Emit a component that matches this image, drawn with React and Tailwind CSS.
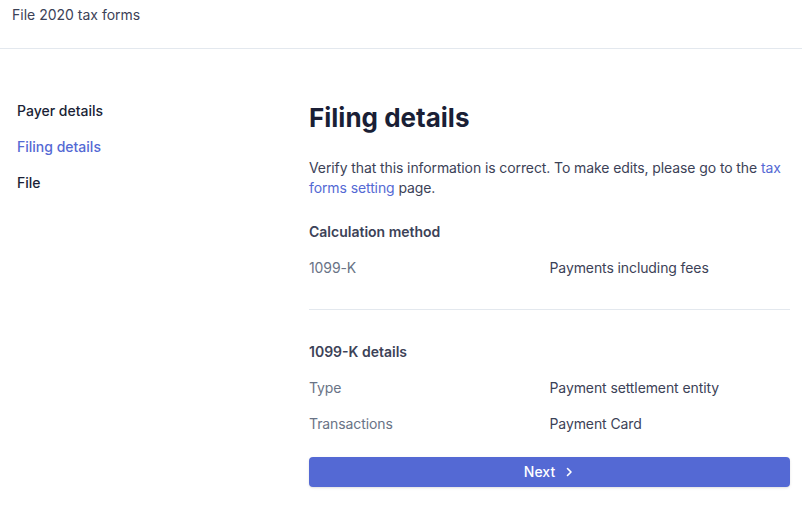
export default function App() {
  const Row = ({ l, v }) => (
    <div className="grid grid-cols-2 h-9 items-center text-sm tracking-[-0.1px]">
      <span className="text-[#697386]">{l}</span>
      <span className="text-[#3c4257]">{v}</span>
    </div>
  );
  return (
    <div className="w-[802px] h-[505px] bg-white" style={{ fontFamily: "Inter, sans-serif" }}>
      <div className="h-[49px] border-b border-[#e3e8ee] px-3 pt-[5px] text-sm text-[#3c4257]">File 2020 tax forms</div>
      <div className="flex pt-[44px]">
        <div className="w-[309px] pl-[17px] flex flex-col text-sm font-medium">
          <div className="h-9 flex items-center text-[#1a1f36]">Payer details</div>
          <div className="h-9 flex items-center text-[#5469d4]">Filing details</div>
          <div className="h-9 flex items-center text-[#1a1f36]">File</div>
        </div>
        <div className="w-[481px]">
          <h1 className="text-[26px] font-bold text-[#1a1f36] leading-8 pt-[9px]">Filing details</h1>
          <p className="mt-[24px] text-sm leading-5 text-[#3c4257] tracking-[-0.1px]">
            Verify that this information is correct. To make edits, please go to the <span className="text-[#5469d4]">tax forms setting</span> page.
          </p>
          <div className="mt-[24px] text-sm font-semibold text-[#3c4257] h-5 flex items-center">Calculation method</div>
          <div className="mt-[8px]"><Row l="1099-K" v="Payments including fees" /></div>
          <div className="border-t border-[#e3e8ee] mt-[23px]" />
          <div className="mt-[32px] text-sm font-semibold text-[#3c4257] h-5 flex items-center">1099-K details</div>
          <div className="mt-[8px]">
            <Row l="Type" v="Payment settlement entity" />
            <Row l="Transactions" v="Payment Card" />
          </div>
          <button className="mt-[15px] w-full h-[30px] rounded bg-[#5469d4] text-white text-sm font-medium flex items-center justify-center gap-2 shadow-sm">
            Next
            <svg width="12" height="12" viewBox="0 0 12 12" fill="none" stroke="white" strokeWidth="1.6" strokeLinecap="round" strokeLinejoin="round"><path d="M4.5 2.5 8 6l-3.5 3.5" /></svg>
          </button>
        </div>
      </div>
    </div>
  );
}
